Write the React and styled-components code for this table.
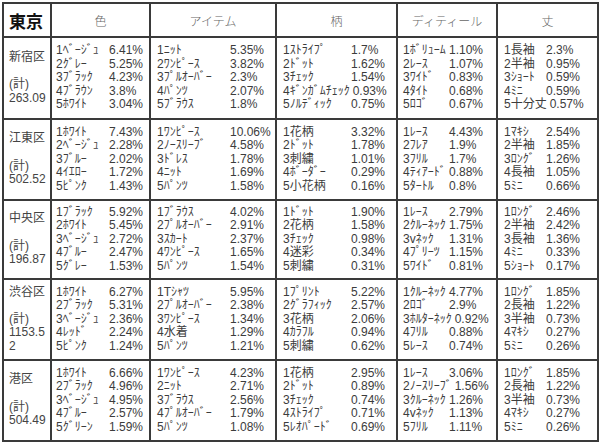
import React from "react";
import styled, { createGlobalStyle } from "styled-components";

const GlobalStyle = createGlobalStyle`
  body {
    margin: 0;
    background: #fff;
    font-family: "Liberation Sans", "Noto Sans CJK JP", sans-serif;
  }
`;

const Page = styled.div`
  padding: 2px;
  width: 600px;
  height: 444px;
  box-sizing: border-box;
`;

const Table = styled.div`
  display: grid;
  grid-template-columns: 46px 97px 124px 119px 98px 99px;
  grid-template-rows: 32px 80px 79px 77px 79px 79px;
  gap: 2px;
  padding: 2px;
  width: fit-content;
  background: #3a3a3a;
`;

const Cell = styled.div`
  background: #fff;
  overflow: hidden;
`;

const Corner = styled(Cell)`
  display: flex;
  align-items: center;
  padding-left: 5px;
  font-family: "Noto Sans CJK JP", sans-serif;
  font-weight: 700;
  font-size: 17px;
  color: #111;
`;

const HeadCell = styled(Cell)`
  display: flex;
  align-items: center;
  justify-content: center;
  font-family: "Noto Sans CJK JP", sans-serif;
  font-weight: 300;
  font-size: 12px;
  color: #666;
`;

const WardCell = styled(Cell)`
  display: flex;
  flex-direction: column;
  justify-content: center;
  padding-left: 5px;
  font-size: 12px;
  line-height: 13.6px;
  color: #444;
  word-break: break-all;
`;

const DataCell = styled(Cell)`
  display: flex;
  flex-direction: column;
  justify-content: center;
  padding-left: ${({ $pad }) => $pad}px;
  font-size: 12px;
  line-height: 13.6px;
  color: #3c3c3c;
`;

const Line = styled.div`
  display: flex;
  white-space: nowrap;
`;

const Name = styled.span`
  flex-shrink: 0;
  min-width: ${({ $w }) => $w}px;
`;

const Pct = styled.span`
  margin-left: 3px;
`;

const columns = [
  { title: "色", pad: 4, w: 50 },
  { title: "アイテム", pad: 6, w: 70 },
  { title: "柄", pad: 6, w: 65 },
  { title: "ディティール", pad: 5, w: 43 },
  { title: "丈", pad: 6, w: 39 },
];

const rows = [
  {
    ward: "新宿区",
    total: "263.09",
    cells: [
      [["1ﾍﾞｰｼﾞｭ", "6.41%"], ["2ｸﾞﾚｰ", "5.25%"], ["3ﾌﾞﾗｯｸ", "4.23%"], ["4ﾌﾞﾗｳﾝ", "3.8%"], ["5ﾎﾜｲﾄ", "3.04%"]],
      [["1ﾆｯﾄ", "5.35%"], ["2ﾜﾝﾋﾟｰｽ", "3.82%"], ["3ﾌﾟﾙｵｰﾊﾞｰ", "2.3%"], ["4ﾊﾟﾝﾂ", "2.07%"], ["5ﾌﾞﾗｳｽ", "1.8%"]],
      [["1ｽﾄﾗｲﾌﾟ", "1.7%"], ["2ﾄﾞｯﾄ", "1.62%"], ["3ﾁｪｯｸ", "1.54%"], ["4ｷﾞﾝｶﾞﾑﾁｪｯｸ", "0.93%"], ["5ﾉﾙﾃﾞｨｯｸ", "0.75%"]],
      [["1ﾎﾞﾘｭｰﾑ", "1.10%"], ["2ﾚｰｽ", "1.07%"], ["3ﾜｲﾄﾞ", "0.83%"], ["4ﾀｲﾄ", "0.68%"], ["5ﾛｺﾞ", "0.67%"]],
      [["1長袖", "2.3%"], ["2半袖", "0.95%"], ["3ｼｮｰﾄ", "0.59%"], ["4ﾐﾆ", "0.59%"], ["5十分丈", "0.57%"]],
    ],
  },
  {
    ward: "江東区",
    total: "502.52",
    cells: [
      [["1ﾎﾜｲﾄ", "7.43%"], ["2ﾍﾞｰｼﾞｭ", "2.28%"], ["3ﾌﾞﾙｰ", "2.02%"], ["4ｲｴﾛｰ", "1.72%"], ["5ﾋﾟﾝｸ", "1.43%"]],
      [["1ﾜﾝﾋﾟｰｽ", "10.06%"], ["2ﾉｰｽﾘｰﾌﾞ", "4.58%"], ["3ﾄﾞﾚｽ", "1.78%"], ["4ﾆｯﾄ", "1.69%"], ["5ﾊﾟﾝﾂ", "1.58%"]],
      [["1花柄", "3.32%"], ["2ﾄﾞｯﾄ", "1.78%"], ["3刺繍", "1.01%"], ["4ﾎﾞｰﾀﾞｰ", "0.29%"], ["5小花柄", "0.16%"]],
      [["1ﾚｰｽ", "4.43%"], ["2ﾌﾚｱ", "1.9%"], ["3ﾌﾘﾙ", "1.7%"], ["4ﾃｨｱｰﾄﾞ", "0.88%"], ["5ﾀｰﾄﾙ", "0.8%"]],
      [["1ﾏｷｼ", "2.54%"], ["2半袖", "1.85%"], ["3ﾛﾝｸﾞ", "1.26%"], ["4長袖", "1.05%"], ["5ﾐﾆ", "0.66%"]],
    ],
  },
  {
    ward: "中央区",
    total: "196.87",
    cells: [
      [["1ﾌﾞﾗｯｸ", "5.92%"], ["2ﾎﾜｲﾄ", "5.45%"], ["3ﾍﾞｰｼﾞｭ", "2.72%"], ["4ﾌﾞﾙｰ", "2.47%"], ["5ｸﾞﾚｰ", "1.53%"]],
      [["1ﾌﾞﾗｳｽ", "4.02%"], ["2ﾌﾟﾙｵｰﾊﾞｰ", "2.91%"], ["3ｽｶｰﾄ", "2.37%"], ["4ﾜﾝﾋﾟｰｽ", "1.65%"], ["5ﾊﾟﾝﾂ", "1.54%"]],
      [["1ﾄﾞｯﾄ", "1.90%"], ["2花柄", "1.58%"], ["3ﾁｪｯｸ", "0.98%"], ["4迷彩", "0.34%"], ["5刺繍", "0.31%"]],
      [["1ﾚｰｽ", "2.79%"], ["2ｸﾙｰﾈｯｸ", "1.75%"], ["3vﾈｯｸ", "1.31%"], ["4ﾌﾟﾘｰﾂ", "1.15%"], ["5ﾜｲﾄﾞ", "0.81%"]],
      [["1ﾛﾝｸﾞ", "2.46%"], ["2半袖", "2.42%"], ["3長袖", "1.36%"], ["4ﾐﾆ", "0.33%"], ["5ｼｮｰﾄ", "0.17%"]],
    ],
  },
  {
    ward: "渋谷区",
    total: "1153.52",
    cells: [
      [["1ﾎﾜｲﾄ", "6.27%"], ["2ﾌﾞﾗｯｸ", "5.31%"], ["3ﾍﾞｰｼﾞｭ", "2.36%"], ["4ﾚｯﾄﾞ", "2.24%"], ["5ﾋﾟﾝｸ", "1.24%"]],
      [["1Tｼｬﾂ", "5.95%"], ["2ﾌﾟﾙｵｰﾊﾞｰ", "2.38%"], ["3ﾜﾝﾋﾟｰｽ", "1.34%"], ["4水着", "1.29%"], ["5ﾊﾟﾝﾂ", "1.21%"]],
      [["1ﾌﾟﾘﾝﾄ", "5.22%"], ["2ｸﾞﾗﾌｨｯｸ", "2.57%"], ["3花柄", "2.06%"], ["4ｶﾗﾌﾙ", "0.94%"], ["5刺繍", "0.62%"]],
      [["1ｸﾙｰﾈｯｸ", "4.77%"], ["2ﾛｺﾞ", "2.9%"], ["3ﾎﾙﾀｰﾈｯｸ", "0.92%"], ["4ﾌﾘﾙ", "0.88%"], ["5ﾚｰｽ", "0.74%"]],
      [["1ﾛﾝｸﾞ", "1.85%"], ["2長袖", "1.22%"], ["3半袖", "0.73%"], ["4ﾏｷｼ", "0.27%"], ["5ﾐﾆ", "0.26%"]],
    ],
  },
  {
    ward: "港区",
    total: "504.49",
    cells: [
      [["1ﾎﾜｲﾄ", "6.66%"], ["2ﾌﾞﾗｯｸ", "4.96%"], ["3ﾍﾞｰｼﾞｭ", "4.95%"], ["4ﾌﾞﾙｰ", "2.57%"], ["5ｸﾞﾘｰﾝ", "1.59%"]],
      [["1ﾜﾝﾋﾟｰｽ", "4.23%"], ["2ﾆｯﾄ", "2.71%"], ["3ﾌﾞﾗｳｽ", "2.56%"], ["4ﾌﾟﾙｵｰﾊﾞｰ", "1.79%"], ["5ﾊﾟﾝﾂ", "1.08%"]],
      [["1花柄", "2.95%"], ["2ﾄﾞｯﾄ", "0.89%"], ["3ﾁｪｯｸ", "0.74%"], ["4ｽﾄﾗｲﾌﾟ", "0.71%"], ["5ﾚｵﾊﾟｰﾄﾞ", "0.69%"]],
      [["1ﾚｰｽ", "3.06%"], ["2ﾉｰｽﾘｰﾌﾞ", "1.56%"], ["3ｸﾙｰﾈｯｸ", "1.26%"], ["4vﾈｯｸ", "1.13%"], ["5ﾌﾘﾙ", "1.11%"]],
      [["1ﾛﾝｸﾞ", "1.85%"], ["2長袖", "1.22%"], ["3半袖", "0.73%"], ["4ﾏｷｼ", "0.27%"], ["5ﾐﾆ", "0.26%"]],
    ],
  },
];

const App = () => {
  return (
    <Page>
      <GlobalStyle />
      <Table>
        <Corner>東京</Corner>
        {columns.map((c) => (
          <HeadCell key={c.title}>{c.title}</HeadCell>
        ))}
        {rows.map((row) => (
          <React.Fragment key={row.ward}>
            <WardCell>
              <div>{row.ward}</div>
              <div>&nbsp;</div>
              <div>(計)</div>
              <div>{row.total}</div>
            </WardCell>
            {row.cells.map((items, i) => (
              <DataCell key={i} $pad={columns[i].pad}>
                {items.map(([name, pct]) => (
                  <Line key={name}>
                    <Name $w={columns[i].w}>{name}</Name>
                    <Pct>{pct}</Pct>
                  </Line>
                ))}
              </DataCell>
            ))}
          </React.Fragment>
        ))}
      </Table>
    </Page>
  );
};

export default App;
